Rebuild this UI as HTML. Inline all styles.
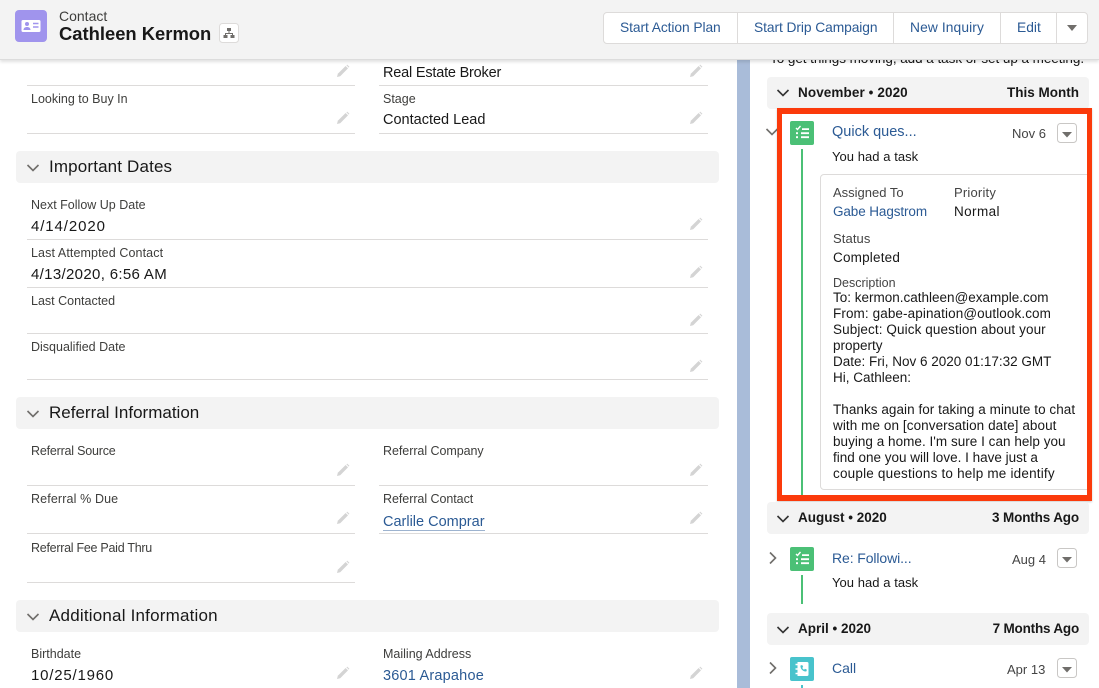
<!DOCTYPE html>
<html><head><meta charset="utf-8"><style>
html,body{margin:0;padding:0;background:#fff}
body{width:1099px;height:688px;overflow:hidden;position:relative;font-family:"Liberation Sans",sans-serif;color:#16325c;filter:blur(.3px)}
.a,.l,.v,.h,.m,.r,.b,.d,.s,.n{position:absolute;white-space:nowrap}
.l{font-size:12.5px;line-height:16px;color:#3e3e3c}
.v{font-size:14.5px;line-height:18px;color:#181818;transform:translateY(1px)}
.h{left:49px;font-size:17px;line-height:20px;color:#181818}
.u{height:1px;background:#dddbda;position:absolute}
.sec{position:absolute;left:16px;width:703px;height:32px;background:#f3f3f3;border-radius:4px}
.mon{position:absolute;left:767px;width:322px;height:32px;background:#f3f3f3;border-radius:4px}
.m{font-size:13.5px;font-weight:bold;line-height:16px;color:#181818}
.b{font-size:13.8px;line-height:18px;color:#2b5a94;top:19px;text-align:center}
svg{position:absolute;display:block}
.d{font-size:13.5px;line-height:16px;color:#181818;left:833px}
.n{font-size:13.5px;line-height:16px;color:#181818}
.g{font-size:13px;color:#444}
.k{color:#2b5a94 !important}
</style></head><body>
<svg width="0" height="0"><defs>
<symbol id="pen" viewBox="0 0 14 14"><path d="M1 13l.8-3.2L9.600 2l2.400 2.400-7.800 7.800z" fill="#d4d4d4"/><path d="M10.400 1.200l.8-.6 2.200 2.200-.7.8z" fill="#d4d4d4"/></symbol>
<symbol id="chev" viewBox="0 0 14 14"><path d="M1.500 4l5.500 5.500L12.500 4" fill="none" stroke="#706e6b" stroke-width="1.600"/></symbol>
<symbol id="chevb" viewBox="0 0 14 14"><path d="M1.500 4l5.500 5.500L12.500 4" fill="none" stroke="#333" stroke-width="1.600"/></symbol>
<symbol id="task" viewBox="0 0 24 24"><rect width="24" height="24" rx="2" fill="#4bc076"/><path d="M6 7l1.500 1.500L10.500 5" fill="none" stroke="#fff" stroke-width="1.400"/><path d="M12 7.200h7v1.800h-7zM6 11.300h2v1.800H6zM11 11.300h8v1.800h-8zM6 15.300h2v1.800H6zM11 15.300h8v1.800h-8z" fill="#fff"/></symbol>
<symbol id="call" viewBox="0 0 24 24"><rect width="24" height="24" rx="2" fill="#48c3cc"/><path d="M7.500 5h9.500a1.500 1.500 0 0 1 1.500 1.500v11a1.500 1.500 0 0 1-1.500 1.500H7.500z" fill="#fff"/><path d="M5.500 7.500h3M5.500 12h3M5.500 16.500h3" stroke="#fff" stroke-width="1.500"/><path d="M10.500 8.500l1.700-.5 1 2-1 .8c.3.900 1 1.600 1.900 1.900l.8-1 2 1-.5 1.700c-3.200.5-6.400-2.700-5.900-5.900z" fill="#48c3cc"/></symbol>
<symbol id="cbtn" viewBox="0 0 20 20"><rect x=".5" y=".5" width="19" height="19" rx="3" fill="#fff" stroke="#c9c7c5"/><path d="M5 9h10l-5 5.500z" fill="#706e6b"/></symbol>
</defs></svg>

<!-- left column -->
<div class="u" style="left:27px;top:85px;width:328px"></div>
<div class="u" style="left:379px;top:85px;width:329px"></div>
<div class="v" style="left:383px;top:63px;letter-spacing:-.2px">Real Estate Broker</div>
<svg style="left:336px;top:64px" width="14" height="14"><use href="#pen"/></svg>
<svg style="left:689px;top:64px" width="14" height="14"><use href="#pen"/></svg>
<div class="l" style="left:31px;top:91px">Looking to Buy In</div>
<div class="l" style="left:383px;top:91px">Stage</div>
<div class="v" style="left:383px;top:110px">Contacted Lead</div>
<div class="u" style="left:27px;top:133px;width:328px"></div>
<div class="u" style="left:379px;top:133px;width:329px"></div>
<svg style="left:336px;top:111px" width="14" height="14"><use href="#pen"/></svg>
<svg style="left:689px;top:111px" width="14" height="14"><use href="#pen"/></svg>

<div class="sec" style="top:151px"></div>
<svg style="left:26px;top:161px" width="14" height="14"><use href="#chev"/></svg>
<div class="h" style="top:157px;letter-spacing:.15px">Important Dates</div>
<div class="l" style="left:31px;top:197px">Next Follow Up Date</div>
<div class="v" style="left:31px;top:217px;font-size:15px;letter-spacing:.9px">4/14/2020</div>
<div class="u" style="left:27px;top:239px;width:681px"></div>
<svg style="left:689px;top:217px" width="14" height="14"><use href="#pen"/></svg>
<div class="l" style="left:31px;top:245px;letter-spacing:.1px">Last Attempted Contact</div>
<div class="v" style="left:31px;top:265px;font-size:15px;letter-spacing:.33px">4/13/2020, 6:56 AM</div>
<div class="u" style="left:27px;top:287px;width:681px"></div>
<svg style="left:689px;top:265px" width="14" height="14"><use href="#pen"/></svg>
<div class="l" style="left:31px;top:293px">Last Contacted</div>
<div class="u" style="left:27px;top:333px;width:681px"></div>
<svg style="left:689px;top:313px" width="14" height="14"><use href="#pen"/></svg>
<div class="l" style="left:31px;top:339px">Disqualified Date</div>
<div class="u" style="left:27px;top:379px;width:681px"></div>
<svg style="left:689px;top:359px" width="14" height="14"><use href="#pen"/></svg>

<div class="sec" style="top:397px"></div>
<svg style="left:26px;top:407px" width="14" height="14"><use href="#chev"/></svg>
<div class="h" style="top:403px">Referral Information</div>
<div class="l" style="left:31px;top:443px;letter-spacing:-.2px">Referral Source</div>
<div class="l" style="left:383px;top:443px;letter-spacing:-.05px">Referral Company</div>
<div class="u" style="left:27px;top:485px;width:328px"></div>
<div class="u" style="left:379px;top:485px;width:329px"></div>
<svg style="left:336px;top:463px" width="14" height="14"><use href="#pen"/></svg>
<svg style="left:689px;top:463px" width="14" height="14"><use href="#pen"/></svg>
<div class="l" style="left:31px;top:491px;letter-spacing:.13px">Referral % Due</div>
<div class="l" style="left:383px;top:491px;letter-spacing:-.05px">Referral Contact</div>
<div class="v k" style="left:383px;top:512px">Carlile Comprar</div>
<div class="u" style="left:383px;top:530px;width:102px;background:#9db3cf"></div>
<div class="u" style="left:27px;top:533px;width:328px"></div>
<div class="u" style="left:379px;top:533px;width:329px"></div>
<svg style="left:336px;top:511px" width="14" height="14"><use href="#pen"/></svg>
<svg style="left:689px;top:511px" width="14" height="14"><use href="#pen"/></svg>
<div class="l" style="left:31px;top:540px;letter-spacing:-.27px">Referral Fee Paid Thru</div>
<div class="u" style="left:27px;top:582px;width:328px"></div>
<svg style="left:336px;top:560px" width="14" height="14"><use href="#pen"/></svg>

<div class="sec" style="top:600px"></div>
<svg style="left:26px;top:610px" width="14" height="14"><use href="#chev"/></svg>
<div class="h" style="top:606px;letter-spacing:.2px">Additional Information</div>
<div class="l" style="left:31px;top:646px">Birthdate</div>
<div class="v" style="left:31px;top:666px;font-size:15px;letter-spacing:.8px">10/25/1960</div>
<div class="l" style="left:383px;top:646px">Mailing Address</div>
<div class="v k" style="left:383px;top:666px;letter-spacing:.2px">3601 Arapahoe</div>
<svg style="left:336px;top:666px" width="14" height="14"><use href="#pen"/></svg>
<svg style="left:689px;top:666px" width="14" height="14"><use href="#pen"/></svg>

<!-- divider strip -->
<div class="a" style="left:737px;top:0;width:13px;height:688px;background:#a9bcd9"></div>

<!-- right column -->
<div class="n" style="left:770px;top:51px;letter-spacing:-.05px">To get things moving, add a task or set up a meeting.</div>
<div class="mon" style="top:77px"></div>
<svg style="left:776px;top:86px" width="14" height="14"><use href="#chevb"/></svg>
<div class="m" style="left:798px;top:85px;letter-spacing:.1px">November • 2020</div>
<div class="m" style="right:20px;top:85px">This Month</div>

<svg style="left:765px;top:125px" width="14" height="14"><use href="#chev"/></svg>
<svg style="left:790px;top:121px" width="24" height="24"><use href="#task"/></svg>
<div class="a" style="left:801px;top:149px;width:2px;height:346px;background:#4bc076"></div>
<div class="n k" style="left:832px;top:124px;font-size:14.5px">Quick ques...</div>
<div class="n g" style="left:1012px;top:126px">Nov 6</div>
<svg style="left:1057px;top:123px" width="20" height="20"><use href="#cbtn"/></svg>
<div class="n" style="left:832px;top:149px;font-size:13px;letter-spacing:.05px">You had a task</div>

<div class="a" style="left:820px;top:174px;width:269px;height:314px;border:1px solid #dddbda;border-radius:4px"></div>
<div class="n g" style="left:833px;top:185px">Assigned To</div>
<div class="n g" style="left:954px;top:185px;letter-spacing:.2px">Priority</div>
<div class="n k" style="left:833px;top:204px;letter-spacing:-.1px">Gabe Hagstrom</div>
<div class="n" style="left:954px;top:204px;letter-spacing:.4px">Normal</div>
<div class="n g" style="left:833px;top:231px;letter-spacing:.1px">Status</div>
<div class="n" style="left:833px;top:250px;letter-spacing:.2px">Completed</div>
<div class="n g" style="left:833px;top:275px;font-size:12.5px">Description</div>
<div class="d" style="top:290px">To: kermon.cathleen@example.com</div>
<div class="d" style="top:306px;letter-spacing:.1px">From: gabe-apination@outlook.com</div>
<div class="d" style="top:322px;letter-spacing:.1px">Subject: Quick question about your</div>
<div class="d" style="top:338px">property</div>
<div class="d" style="top:354px">Date: Fri, Nov 6 2020 01:17:32 GMT</div>
<div class="d" style="top:370px">Hi, Cathleen:</div>
<div class="d" style="top:402px;letter-spacing:.05px">Thanks again for taking a minute to chat</div>
<div class="d" style="top:418px;letter-spacing:.08px">with me on [conversation date] about</div>
<div class="d" style="top:434px;letter-spacing:.03px">buying a home. I'm sure I can help you</div>
<div class="d" style="top:450px">find one you will love. I have just a</div>
<div class="d" style="top:466px;letter-spacing:.2px">couple questions to help me identify</div>

<div class="a" style="left:777px;top:108px;width:315px;height:393px;border:5px solid #fb3a0b;box-sizing:border-box;border-top-width:6px;border-bottom-width:6px;box-shadow:0 1px 2px rgba(0,0,0,.2)"></div>

<div class="mon" style="top:502px"></div>
<svg style="left:776px;top:512px" width="14" height="14"><use href="#chevb"/></svg>
<div class="m" style="left:798px;top:510px">August • 2020</div>
<div class="m" style="right:20px;top:510px;letter-spacing:-.15px">3 Months Ago</div>
<svg style="left:766px;top:551px" width="14" height="14"><g transform="rotate(-90 7 7)"><use href="#chev"/></g></svg>
<svg style="left:790px;top:547px" width="24" height="24"><use href="#task"/></svg>
<div class="a" style="left:801px;top:575px;width:2px;height:29px;background:#4bc076"></div>
<div class="n k" style="left:832px;top:550px;font-size:14px;letter-spacing:-.1px">Re: Followi...</div>
<div class="n g" style="left:1012px;top:552px">Aug 4</div>
<svg style="left:1057px;top:548px" width="20" height="20"><use href="#cbtn"/></svg>
<div class="n" style="left:832px;top:575px;font-size:13px;letter-spacing:.05px">You had a task</div>

<div class="mon" style="top:613px"></div>
<svg style="left:776px;top:623px" width="14" height="14"><use href="#chevb"/></svg>
<div class="m" style="left:798px;top:621px">April • 2020</div>
<div class="m" style="right:20px;top:621px;letter-spacing:-.2px">7 Months Ago</div>
<svg style="left:766px;top:661px" width="14" height="14"><g transform="rotate(-90 7 7)"><use href="#chev"/></g></svg>
<svg style="left:790px;top:657px" width="24" height="24"><use href="#call"/></svg>
<div class="a" style="left:801px;top:685px;width:2px;height:3px;background:#48c3cc"></div>
<div class="n k" style="left:832px;top:660px;font-size:14px">Call</div>
<div class="n g" style="left:1007px;top:662px">Apr 13</div>
<svg style="left:1057px;top:658px" width="20" height="20"><use href="#cbtn"/></svg>

<!-- header -->
<div class="a" style="left:0;top:0;width:1099px;height:59px;background:#f3f3f3;border-bottom:1px solid #dcdcdc;box-shadow:0 2px 3px rgba(0,0,0,.12)"></div>
<svg style="left:15px;top:10px" width="32" height="32"><rect width="32" height="32" rx="4" fill="#a094ed"/><rect x="6.500" y="10" width="19" height="12" rx="1.500" fill="#fff"/><circle cx="12" cy="14" r="2" fill="#a094ed"/><path d="M8.500 20c0-2 1.500-3 3.500-3s3.500 1 3.500 3z" fill="#a094ed"/><path d="M18 13.500h5.500M18 17h5.500" stroke="#a094ed" stroke-width="1.500"/></svg>
<div class="a" style="left:59px;top:8px;font-size:14px;line-height:16px;color:#3e3e3c">Contact</div>
<div class="a" style="left:59px;top:23px;font-size:18.4px;line-height:22px;font-weight:bold;color:#181818">Cathleen Kermon</div>
<svg style="left:219px;top:23px" width="20" height="20"><rect x=".5" y=".5" width="19" height="19" rx="3" fill="#fff" stroke="#dddbda"/><path d="M8 5h4v3H8zM9.500 8h1v2H14v2h-1v-1H7v1H6v-2h3.500z" fill="#706e6b"/><path d="M4.500 12h4v3h-4zM11.500 12h4v3h-4z" fill="#706e6b"/></svg>
<div class="a" style="left:603px;top:12px;width:485px;height:32px;background:#fff;border:1px solid #dddbda;border-radius:4px;box-sizing:border-box"></div>
<div class="a" style="left:737px;top:13px;width:1px;height:30px;background:#dddbda"></div>
<div class="a" style="left:893px;top:13px;width:1px;height:30px;background:#dddbda"></div>
<div class="a" style="left:1000px;top:13px;width:1px;height:30px;background:#dddbda"></div>
<div class="a" style="left:1056px;top:13px;width:1px;height:30px;background:#dddbda"></div>
<div class="b" style="left:620px;letter-spacing:-.08px">Start Action Plan</div>
<div class="b" style="left:754px;letter-spacing:-.08px">Start Drip Campaign</div>
<div class="b" style="left:910px;letter-spacing:.1px">New Inquiry</div>
<div class="b" style="left:1017px">Edit</div>
<svg style="left:1066px;top:24px" width="12" height="10"><path d="M1 1h10L6 7z" fill="#706e6b"/></svg>
</body></html>
